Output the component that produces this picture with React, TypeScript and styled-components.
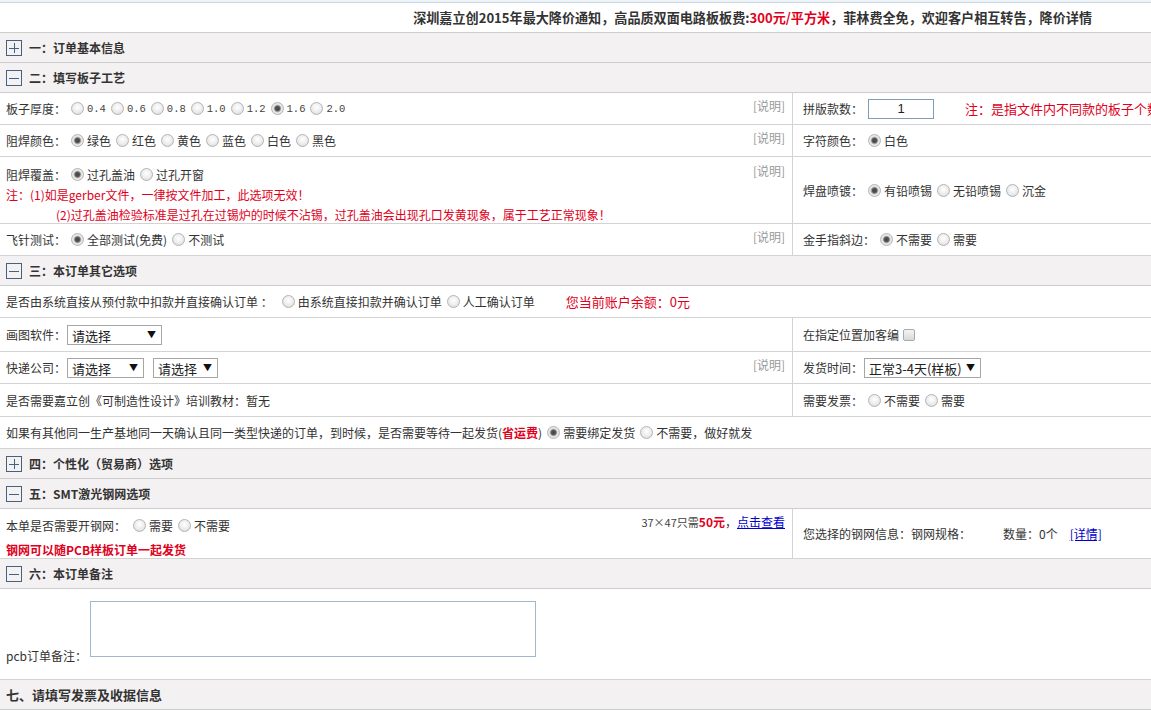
import React from 'react';
import styled, { createGlobalStyle } from 'styled-components';

const GlobalStyle = createGlobalStyle`
  html, body {
    margin: 0;
    padding: 0;
    background: #fff;
    overflow: hidden;
  }
  body {
    font-family: "Noto Sans CJK SC", "Liberation Sans", sans-serif;
    font-size: 12px;
    color: #333;
  }
`;

const Page = styled.div`
  width: 1151px;
`;

const TopLine = styled.div`
  height: 2px;
  background: #eef3f8;
  border-bottom: 1px solid #c9d6e3;
`;

const Notice = styled.div`
  height: 29px;
  border-bottom: 1px solid #cdcdcd;
  display: flex;
  align-items: center;
  justify-content: flex-end;
  padding-right: 59px;
  font-size: 13.1px;
  font-weight: bold;
  color: #333;
  white-space: nowrap;
`;

const Red = styled.span<{ $bold?: boolean; $size?: number }>`
  color: #e0001b;
  font-weight: ${p => (p.$bold ? 'bold' : 'inherit')};
  font-size: ${p => (p.$size ? `${p.$size}px` : 'inherit')};
`;

const SectionHead = styled.div<{ $size?: number }>`
  height: 29px;
  border-bottom: 1px solid #cdcdcd;
  background: #f3f1f1;
  display: flex;
  align-items: center;
  gap: 7px;
  padding-left: 6px;
  font-weight: bold;
  font-size: ${p => p.$size || 12}px;
  color: #333;
`;

const Row = styled.div<{ $h: number }>`
  display: flex;
  height: ${p => p.$h}px;
  box-sizing: border-box;
  border-bottom: 1px solid #d3d3d3;
`;

const LeftCell = styled.div<{ $top?: boolean }>`
  width: 793px;
  box-sizing: border-box;
  flex: none;
  padding: ${p => (p.$top ? '7px' : '0')} 7px 0 6px;
  display: flex;
  align-items: ${p => (p.$top ? 'flex-start' : 'center')};
  border-right: 1px solid #d3d3d3;
`;

const RightCell = styled.div`
  flex: 1;
  min-width: 0;
  padding-left: 10px;
  display: flex;
  align-items: center;
  white-space: nowrap;
  overflow: hidden;

  & > * {
    flex-shrink: 0;
  }
`;

const FullCell = styled.div`
  flex: 1;
  padding-left: 6px;
  display: flex;
  align-items: center;
  white-space: nowrap;
`;

const Content = styled.div`
  flex: 1;
  display: flex;
  flex-direction: column;
`;

const Line = styled.div<{ $h?: number; $indent?: number }>`
  display: flex;
  align-items: center;
  height: ${p => p.$h || 20}px;
  padding-left: ${p => p.$indent || 0}px;
  white-space: nowrap;
`;

const Hint = styled.span`
  margin-left: auto;
  align-self: flex-start;
  margin-top: 6px;
  line-height: 14px;
  color: #999;
  white-space: nowrap;
`;

const Opt = styled.label`
  display: inline-flex;
  align-items: center;
  white-space: nowrap;
`;

const Mono = styled.span`
  font-family: "Liberation Mono", monospace;
  font-size: 10.5px;
  color: #444;
`;

const Radio = styled.input`
  appearance: none;
  -webkit-appearance: none;
  width: 13px;
  height: 13px;
  box-sizing: border-box;
  margin: 0 3px 0 5px;
  border-radius: 50%;
  border: 1px solid #b4b4b4;
  background: radial-gradient(circle at 50% 40%, #ffffff 0, #ececec 55%, #d2d2d2 100%);
  flex: none;

  &:checked {
    background: radial-gradient(circle at 50% 50%, #444 0, #555 2.2px, #a5a5a5 3.2px, #ececec 4.3px, #d6d6d6 100%);
  }
`;

const Check = styled.input`
  appearance: none;
  -webkit-appearance: none;
  width: 12px;
  height: 12px;
  box-sizing: border-box;
  margin: 0 0 0 4px;
  border: 1px solid #a9a9a9;
  border-radius: 2px;
  background: linear-gradient(#f4f4f4, #d9d9d9);
`;

const SelectWrap = styled.span<{ $w: number; $gap?: number }>`
  position: relative;
  display: inline-block;
  width: ${p => p.$w}px;
  height: 20px;
  margin-left: ${p => p.$gap ?? 1}px;
  flex: none;

  &::after {
    content: '▼';
    position: absolute;
    right: 6px;
    top: 4px;
    font-size: 9px;
    line-height: 12px;
    color: #111;
    pointer-events: none;
  }
`;

const Select = styled.select`
  appearance: none;
  -webkit-appearance: none;
  width: 100%;
  height: 100%;
  box-sizing: border-box;
  border: 1px solid #a6a6a6;
  border-radius: 0;
  background: #fff;
  padding: 0 0 0 4px;
  font-family: inherit;
  font-size: 13px;
  color: #222;
  outline: none;
`;

const NumInput = styled.input`
  width: 66px;
  height: 20px;
  box-sizing: border-box;
  margin-left: 5px;
  border: 1px solid #7f9db9;
  text-align: center;
  font-family: "Liberation Sans", sans-serif;
  font-size: 13px;
  color: #222;
  padding: 0;
`;

const Memo = styled.textarea`
  width: 446px;
  height: 56px;
  box-sizing: border-box;
  margin: 0 0 7px 0;
  border: 1px solid #9fb7cf;
  resize: none;
`;

const MemoCell = styled.div`
  flex: 1;
  display: flex;
  align-items: flex-end;
  padding: 12px 0 15px 6px;
  gap: 3px;
`;

const Link = styled.a`
  color: #0000cc;
  text-decoration: underline;
  cursor: pointer;
`;

const Small = styled.span`
  font-size: 11px;
  color: #444;
`;

const Spacer = styled.span<{ $w: number }>`
  display: inline-block;
  flex: none;
  width: ${p => p.$w}px;
`;

function Toggle({ open }: { open: boolean }) {
  return (
    <svg width="16" height="16" viewBox="0 0 16 16">
      <rect x="0.5" y="0.5" width="15" height="15" fill="none" stroke="#46617f" />
      <path d="M3 8.5h10" stroke="#46617f" />
      {!open && <path d="M8.5 3v10" stroke="#46617f" />}
    </svg>
  );
}

function R({ name, checked, children }: { name: string; checked?: boolean; children: React.ReactNode }) {
  return (
    <Opt>
      <Radio type="radio" name={name} defaultChecked={checked} />
      {children}
    </Opt>
  );
}

const thickness = ['0.4', '0.6', '0.8', '1.0', '1.2', '1.6', '2.0'];
const colors = ['绿色', '红色', '黄色', '蓝色', '白色', '黑色'];

export default function App() {
  return (
    <Page>
      <GlobalStyle />
      <TopLine />
      <Notice>
        深圳嘉立创2015年最大降价通知，高品质双面电路板板费:<Red>300元/平方米</Red>，菲林费全免，欢迎客户相互转告，降价详情
      </Notice>

      <SectionHead><Toggle open={false} />一：订单基本信息</SectionHead>
      <SectionHead><Toggle open />二：填写板子工艺</SectionHead>

      <Row $h={32}>
        <LeftCell>
          <Content>
            <Line>
              板子厚度：
              {thickness.map(t => (
                <R key={t} name="thick" checked={t === '1.6'}><Mono>{t}</Mono></R>
              ))}
            </Line>
          </Content>
          <Hint>[说明]</Hint>
        </LeftCell>
        <RightCell>
          <span>拼版款数：</span><NumInput defaultValue="1" />
          <Spacer $w={31} />
          <Red $size={13}>注：是指文件内不同款的板子个数</Red>
        </RightCell>
      </Row>

      <Row $h={32}>
        <LeftCell>
          <Content>
            <Line>
              阻焊颜色：
              {colors.map(c => (
                <R key={c} name="mask" checked={c === '绿色'}>{c}</R>
              ))}
            </Line>
          </Content>
          <Hint>[说明]</Hint>
        </LeftCell>
        <RightCell>
          字符颜色：<R name="silk" checked>白色</R>
        </RightCell>
      </Row>

      <Row $h={67}>
        <LeftCell $top>
          <Content>
            <Line>
              阻焊覆盖：<R name="via" checked>过孔盖油</R><R name="via">过孔开窗</R>
            </Line>
            <Line><Red>注：(1)如是gerber文件，一律按文件加工，此选项无效！</Red></Line>
            <Line $indent={50}><Red>(2)过孔盖油检验标准是过孔在过锡炉的时候不沾锡，过孔盖油会出现孔口发黄现象，属于工艺正常现象！</Red></Line>
          </Content>
          <Hint style={{ marginTop: 0 }}>[说明]</Hint>
        </LeftCell>
        <RightCell>
          焊盘喷镀：<R name="pad" checked>有铅喷锡</R><R name="pad">无铅喷锡</R><R name="pad">沉金</R>
        </RightCell>
      </Row>

      <Row $h={32}>
        <LeftCell>
          <Content>
            <Line>
              飞针测试：<R name="fly" checked>全部测试(免费)</R><R name="fly">不测试</R>
            </Line>
          </Content>
          <Hint>[说明]</Hint>
        </LeftCell>
        <RightCell>
          金手指斜边：<R name="gold" checked>不需要</R><R name="gold">需要</R>
        </RightCell>
      </Row>

      <SectionHead><Toggle open />三：本订单其它选项</SectionHead>

      <Row $h={32}>
        <FullCell>
          是否由系统直接从预付款中扣款并直接确认订单 ：
          <Spacer $w={4} />
          <R name="pay">由系统直接扣款并确认订单</R><R name="pay">人工确认订单</R>
          <Spacer $w={31} />
          <Red $size={13}>您当前账户余额：0元</Red>
        </FullCell>
      </Row>

      <Row $h={34}>
        <LeftCell>
          <Content>
            <Line>
              画图软件：<SelectWrap $w={95}><Select><option>请选择</option></Select></SelectWrap>
            </Line>
          </Content>
        </LeftCell>
        <RightCell>
          在指定位置加客编<Check type="checkbox" />
        </RightCell>
      </Row>

      <Row $h={32}>
        <LeftCell>
          <Content>
            <Line>
              快递公司：<SelectWrap $w={77}><Select><option>请选择</option></Select></SelectWrap>
              <SelectWrap $w={65} $gap={9}><Select><option>请选择</option></Select></SelectWrap>
            </Line>
          </Content>
          <Hint>[说明]</Hint>
        </LeftCell>
        <RightCell>
          发货时间：<SelectWrap $w={117}><Select><option>正常3-4天(样板)</option></Select></SelectWrap>
        </RightCell>
      </Row>

      <Row $h={33}>
        <LeftCell>
          <Content>
            <Line>是否需要嘉立创《可制造性设计》培训教材：暂无</Line>
          </Content>
        </LeftCell>
        <RightCell>
          需要发票：<R name="bill">不需要</R><R name="bill">需要</R>
        </RightCell>
      </Row>

      <Row $h={32}>
        <FullCell>
          如果有其他同一生产基地同一天确认且同一类型快递的订单，到时候，是否需要等待一起发货(<Red $bold>省运费</Red>)
          <R name="bind" checked>需要绑定发货</R><R name="bind">不需要，做好就发</R>
        </FullCell>
      </Row>

      <SectionHead><Toggle open={false} />四：个性化（贸易商）选项</SectionHead>
      <SectionHead><Toggle open />五：SMT激光钢网选项</SectionHead>

      <Row $h={50}>
        <LeftCell $top style={{ paddingTop: 4 }}>
          <Content>
            <Line $h={24}>
              本单是否需要开钢网：<Spacer $w={2} /><R name="steel">需要</R><R name="steel">不需要</R>
            </Line>
            <Line $h={24}><Red $bold>钢网可以随PCB样板订单一起发货</Red></Line>
          </Content>
          <Hint style={{ color: '#444', marginTop: 2 }}>
            <Small>37×47只需</Small><Red $bold>50元</Red>，<Link>点击查看</Link>
          </Hint>
        </LeftCell>
        <RightCell>
          您选择的钢网信息：钢网规格：<Spacer $w={32} />数量：0个<Spacer $w={12} /><Link>[详情]</Link>
        </RightCell>
      </Row>

      <SectionHead><Toggle open />六：本订单备注</SectionHead>

      <Row $h={91}>
        <MemoCell>
          <span>pcb订单备注：</span>
          <Memo />
        </MemoCell>
      </Row>

      <SectionHead $size={13}>七、请填写发票及收据信息</SectionHead>
    </Page>
  );
}
